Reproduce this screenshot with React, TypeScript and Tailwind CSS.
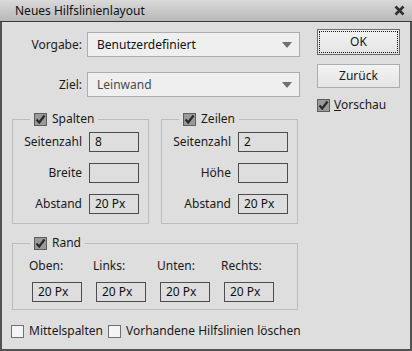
import React from "react";

function Check({ checked }: { checked?: boolean }) {
  if (!checked) {
    return <span className="block h-[13px] w-[13px] shrink-0 border border-[#707070] bg-[#f4f4f4]" />;
  }
  return (
    <span className="flex h-[13px] w-[13px] shrink-0 items-center justify-center border border-[#5e5e5e] bg-[#9a9a9a]">
      <svg width="11" height="11" viewBox="0 0 11 11">
        <path d="M1.5 5.5 L4.2 8.5 L9.5 1.5" fill="none" stroke="#2a2a2a" strokeWidth="2.2" />
      </svg>
    </span>
  );
}

function Select({ value, dim }: { value: string; dim?: boolean }) {
  return (
    <div className="flex h-[25px] w-[213px] items-center justify-between border border-[#adadad] bg-[#efefef] pl-[9px] pr-[7px]">
      <span className={dim ? "text-[#4a4a4a]" : "text-[#111]"}>{value}</span>
      <svg width="10" height="6" viewBox="0 0 10 6">
        <path d="M0 0 H10 L5 6 Z" fill="#6f6f6f" />
      </svg>
    </div>
  );
}

function Field({ value }: { value?: string }) {
  return (
    <div className="flex h-[20px] w-[50px] items-center border border-[#4d4d4d] pl-[5px] text-[#111]">{value}</div>
  );
}

function Row({ label, value }: { label: string; value?: string }) {
  return (
    <div className="flex h-[20px] items-center">
      <span className="w-[69px] text-right">{label}</span>
      <span className="ml-[7px]">
        <Field value={value} />
      </span>
    </div>
  );
}

function Group({ title, rows }: { title: string; rows: [string, string?][] }) {
  return (
    <fieldset className="h-[113px] w-[137px] border border-[#bcbcbc]">
      <legend className="ml-[17px] px-[4px]">
        <span className="flex items-center gap-[5px]">
          <Check checked />
          <span>{title}</span>
        </span>
      </legend>
      <div className="flex flex-col gap-[11px] pt-[5px]">
        {rows.map(([l, v]) => (
          <Row key={l} label={l} value={v} />
        ))}
      </div>
    </fieldset>
  );
}

export default function App() {
  return (
    <div className="flex h-[351px] w-[412px] flex-col bg-[#dedede] font-['Noto_Sans',sans-serif] text-[12px] leading-[16px] text-[#1a1a1a]">
      <div className="flex h-[22px] shrink-0 items-center justify-between border-b border-[#3a3a3a] bg-gradient-to-b from-[#dadada] to-[#b8b8b8] pl-[15px] pr-[7px]">
        <span className="text-[#111]">Neues Hilfslinienlayout</span>
        <svg width="11" height="11" viewBox="0 0 11 11">
          <path d="M1.5 1.5 L9.5 9.5 M9.5 1.5 L1.5 9.5" stroke="#303030" strokeWidth="2.6" />
        </svg>
      </div>
      <div className="flex flex-1 border-x-2 border-b-2 border-[#525252] pl-[10px] pt-[7px]">
        <div className="flex w-[288px] flex-col pt-[3px]">
          <div className="flex items-center">
            <span className="w-[70px] text-right">Vorgabe:</span>
            <span className="ml-[5px]">
              <Select value="Benutzerdefiniert" />
            </span>
          </div>
          <div className="mt-[15px] flex items-center">
            <span className="w-[70px] text-right">Ziel:</span>
            <span className="ml-[5px]">
              <Select value="Leinwand" dim />
            </span>
          </div>
          <div className="mt-[14px] flex gap-[12px]">
            <Group title="Spalten" rows={[["Seitenzahl", "8"], ["Breite"], ["Abstand", "20 Px"]]} />
            <Group title="Zeilen" rows={[["Seitenzahl", "2"], ["Höhe"], ["Abstand", "20 Px"]]} />
          </div>
          <fieldset className="mt-[11px] w-[286px] border border-[#bcbcbc] pb-[7px]">
            <legend className="ml-[17px] px-[4px]">
              <span className="flex items-center gap-[5px]">
                <Check checked />
                <span>Rand</span>
              </span>
            </legend>
            <div className="grid grid-cols-[64px_64px_64px_64px] pl-[19px] pt-[7px]">
              {["Oben:", "Links:", "Unten:", "Rechts:"].map((l) => (
                <span key={l} className="-ml-[3px]">{l}</span>
              ))}
            </div>
            <div className="mt-[8px] grid grid-cols-[64px_64px_64px_64px] pl-[19px]">
              {[0, 1, 2, 3].map((i) => (
                <Field key={i} value="20 Px" />
              ))}
            </div>
          </fieldset>
          <div className="-ml-[1px] mt-[13px] flex items-center gap-[5px] whitespace-nowrap">
            <Check />
            <span>Mittelspalten</span>
            <Check />
            <span>Vorhandene Hilfslinien löschen</span>
          </div>
        </div>
        <div className="ml-[17px] flex w-[83px] flex-col">
          <button className="flex h-[26px] items-center justify-center border border-[#6a6a6a] bg-gradient-to-b from-[#f3f3f3] to-[#e4e4e4] p-[1px]">
            <span className="flex h-full w-full items-center justify-center border border-dotted border-[#111]">OK</span>
          </button>
          <button className="mt-[9px] flex h-[24px] items-center justify-center border border-[#adadad] bg-gradient-to-b from-[#f3f3f3] to-[#e4e4e4]">
            Zurück
          </button>
          <div className="mt-[9px] flex items-center gap-[4px]">
            <Check checked />
            <span>
              <span className="underline">V</span>orschau
            </span>
          </div>
        </div>
      </div>
    </div>
  );
}
